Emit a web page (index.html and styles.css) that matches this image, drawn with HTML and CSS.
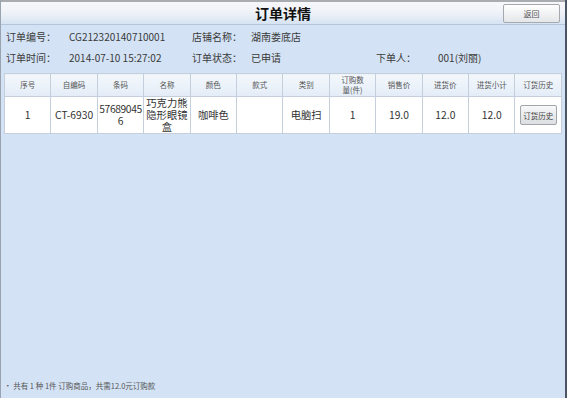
FILE: index.html
```html
<!DOCTYPE html>
<html lang="zh-CN">
<head>
    <meta charset="UTF-8">
    <meta name="viewport" content="width=device-width, initial-scale=1.0">
    <title>订单详情</title>
    <link rel="stylesheet" href="styles.css">
</head>
<body>
    <div class="page">
        <!-- Barra superior con título y botón de volver -->
        <div class="topbar">
            <h1>订单详情</h1>
            <button class="back-button">返回</button>
        </div>

        <!-- Datos del pedido -->
        <div class="info">
            <div class="info-row">
                <span class="label">订单编号：</span>
                <span class="value">CG212320140710001</span>
                <span class="label label-mid">店铺名称：</span>
                <span class="value">湖南娄底店</span>
            </div>
            <div class="info-row">
                <span class="label">订单时间：</span>
                <span class="value">2014-07-10 15:27:02</span>
                <span class="label label-mid">订单状态：</span>
                <span class="value value-short">已申请</span>
                <span class="label label-short">下单人：</span>
                <span class="value">001(刘丽)</span>
            </div>
        </div>

        <!-- Tabla de productos -->
        <table class="items">
            <thead>
                <tr>
                    <th>序号</th>
                    <th>自编码</th>
                    <th>条码</th>
                    <th>名称</th>
                    <th>颜色</th>
                    <th>款式</th>
                    <th>类别</th>
                    <th>订购数<br>量(件)</th>
                    <th>销售价</th>
                    <th>进货价</th>
                    <th>进货小计</th>
                    <th>订货历史</th>
                </tr>
            </thead>
            <tbody>
                <tr>
                    <td>1</td>
                    <td>CT-6930</td>
                    <td class="breakall">576890456</td>
                    <td>巧克力熊隐形眼镜盒</td>
                    <td>咖啡色</td>
                    <td></td>
                    <td>电脑扫</td>
                    <td>1</td>
                    <td>19.0</td>
                    <td>12.0</td>
                    <td>12.0</td>
                    <td><button class="history-button">订货历史</button></td>
                </tr>
            </tbody>
        </table>

        <div class="footer">• 共有 1 种 1件 订购商品，共需12.0元订购款</div>
    </div>
</body>
</html>
```

FILE: styles.css
```css
body {
    margin: 0;
    font-family: "Noto Sans CJK SC", "Noto Sans", sans-serif;
    color: #333;
    background-color: #d3e2f4;
}

.page {
    height: 398px;
    box-sizing: border-box;
    display: flex;
    flex-direction: column;
    border-left: 1px solid #9aa4b0;
    border-right: 2px solid #4a5566;
    background-color: #d3e2f4;
}

.topbar {
    height: 25px;
    box-sizing: border-box;
    border-top: 2px solid #a9adb2;
    border-bottom: 1px solid #b5c6dc;
    background: linear-gradient(#f7f8fa, #eef2f7 50%, #d6e3f3);
    display: flex;
    align-items: center;
    justify-content: center;
    position: relative;
}

.topbar h1 {
    margin: 0;
    font-size: 14px;
    font-weight: bold;
    color: #111;
    line-height: 1;
}

.back-button {
    position: absolute;
    right: 5px;
    top: 2px;
    width: 57px;
    height: 19px;
    padding: 0;
    font-family: inherit;
    font-size: 8px;
    color: #555;
    border: 1px solid #a5a8ac;
    border-radius: 2px;
    background: linear-gradient(#ffffff, #e4e6e9);
}

.info {
    padding: 1px 0 0 5px;
    font-size: 10px;
    color: #3a3a3a;
}

.info-row {
    display: flex;
    align-items: center;
    height: 21px;
}

.label {
    width: 63px;
}

.value {
    width: 123px;
}

.label-mid {
    width: 59px;
}

.value-short {
    width: 125px;
}

.label-short {
    width: 62px;
}

.items {
    margin: 5px 0 0 3px;
    width: 558px;
    table-layout: fixed;
    border-collapse: collapse;
    background-color: #fff;
}

.items th,
.items td {
    border: 1px solid #c5cfdb;
    text-align: center;
    padding: 0;
}

.items th {
    height: 22px;
    font-size: 7.5px;
    font-weight: normal;
    color: #555;
    line-height: 1.3;
    white-space: nowrap;
    background: linear-gradient(#f4f8fc, #e3ecf7);
}

.items td {
    height: 36px;
    font-size: 10.3px;
    color: #333;
    line-height: 1.15;
}

.breakall {
    word-break: break-all;
    letter-spacing: -0.4px;
}

.history-button {
    width: 37px;
    height: 20px;
    padding: 0;
    font-family: inherit;
    font-size: 7.5px;
    color: #444;
    border: 1px solid #a2a5a9;
    border-radius: 2px;
    background: linear-gradient(#f8f8f8, #dcdee1);
}

.footer {
    margin-top: auto;
    padding: 0 0 7px 3px;
    font-size: 7.5px;
    color: #555;
}
```
